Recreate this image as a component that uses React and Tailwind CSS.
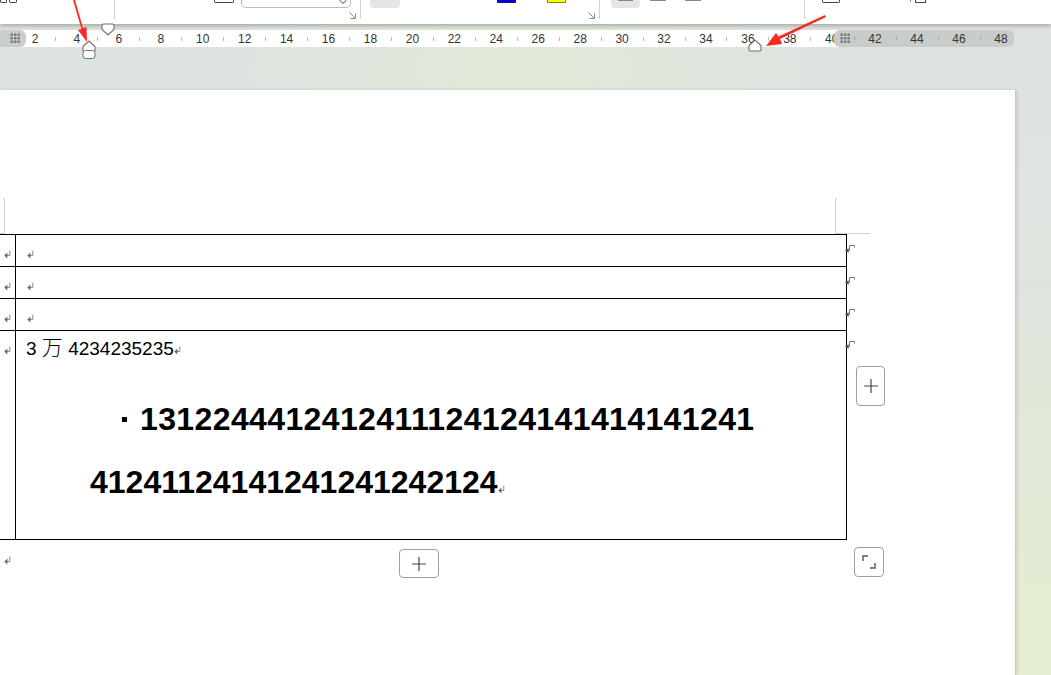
import React from "react";

const SANS = "font-['Liberation_Sans',Arial,'Noto_Sans_CJK_SC',sans-serif]";

// paragraph mark, Word style
const ReturnMark = ({ className = "" }) => (
  <svg width="7" height="9" viewBox="0 0 7 9" className={`shrink-0 ${className}`}>
    <path d="M5.8 0.5V5.5H2.5" fill="none" stroke="#8a8a8a" strokeWidth="1" />
    <path d="M3.4 2.6L0.3 5.4L3.4 8.4Z" fill="#666" />
  </svg>
);

// the one that sits outside the right table border
const EndMark = ({ className = "" }) => (
  <svg width="10" height="8" viewBox="0 0 10 8" className={`relative shrink-0 ${className}`}>
    <path d="M9.5 2.5V0.5H4.5V5.5H2.5" fill="none" stroke="#777" strokeWidth="1" />
    <path d="M3.6 3.2L0 5.5L3.6 7.8Z" fill="#555" />
  </svg>
);

const Dots = () => (
  <svg width="11" height="11" viewBox="0 0 11 11">
    {[0.5, 4, 7.5].map((y) => [0.5, 4, 7.5].map((x) => <rect key={`${x}-${y}`} x={x} y={y} width="2.4" height="2.4" fill="#777" />))}
  </svg>
);

const Ruler = () => {
  const marks = [];
  for (let n = 2; n <= 40; n += 2) marks.push(n);
  return (
    <div className="relative mt-[6px] h-[17px] w-full">
      <div className="absolute inset-y-0 left-0 w-[840px] bg-white" />
      <div className={`relative flex h-full pl-[24.5px] text-[12px] text-[#333] ${SANS}`}>
        {marks.map((n) => (
          <React.Fragment key={n}>
            <span className="flex w-[20.97px] shrink-0 items-center justify-center">{n}</span>
            <span className="flex w-[20.97px] shrink-0 items-center justify-center">
              <i className="block h-[4px] w-px bg-[#bbb]" />
            </span>
          </React.Fragment>
        ))}
      </div>
      <div className="absolute inset-y-0 left-0 flex w-[26px] items-center justify-end rounded-r-md bg-[#c9cdcb] pr-[5px]">
        <Dots />
      </div>
      <div className={`absolute inset-y-0 left-[834px] flex w-[180px] items-center rounded-md bg-[#c8cdcb] pl-[6px] text-[12px] text-[#333] ${SANS}`}>
        <Dots />
        {[42, 44, 46, 48].map((n, i) => (
          <span key={n} className={`absolute w-[24px] text-center ${["left-[29px]", "left-[71px]", "left-[113px]", "left-[155px]"][i]}`}>{n}</span>
        ))}
        {["left-[20px]", "left-[62px]", "left-[104px]", "left-[146px]"].map((c) => (
          <i key={c} className={`absolute top-[6px] block h-[4px] w-px bg-[#a5a9a7] ${c}`} />
        ))}
      </div>
    </div>
  );
};

const Marker = ({ className, up = true }) => (
  <svg width="14" height="13" viewBox="0 0 14 13" className={`absolute ${className}`}>
    <path
      d={up ? "M1 10.5V6.5L7 1L13 6.5V10.5Q13 12 11.5 12H2.5Q1 12 1 10.5Z" : "M1 2.5V6.5L7 12L13 6.5V2.5Q13 1 11.5 1H2.5Q1 1 1 2.5Z"}
      fill="white"
      stroke="#6f6f6f"
      strokeWidth="1.1"
    />
  </svg>
);

const Arrow = ({ className, width, height, viewBox, d }) => (
  <svg width={width} height={height} viewBox={viewBox} className={`absolute ${className}`}>
    <path d={d} fill="#f92a22" />
  </svg>
);

const SquareButton = ({ className = "", children }) => (
  <div className={`flex items-center justify-center rounded-[4px] border-[1.5px] border-[#a0a0a0] bg-white ${className}`}>{children}</div>
);

const Plus = () => (
  <svg width="14" height="14" viewBox="0 0 14 14">
    <path d="M7 0V14M0 7H14" stroke="#444" strokeWidth="1.2" />
  </svg>
);

const DialogArrow = ({ className }) => (
  <svg width="7" height="7" viewBox="0 0 7 7" className={`absolute ${className}`}>
    <path d="M6.5 1.5V6.5H1.5M0.5 0.5L6 6" fill="none" stroke="#888" />
  </svg>
);

const Row = ({ children, className = "" }) => (
  <div className={`flex w-[860px] ${className}`}>
    <div className="flex w-[16px] shrink-0 border-t border-r border-black pl-[4px] pt-[15px]">
      <ReturnMark />
    </div>
    <div className="w-[831px] shrink-0 border-t border-r border-black pl-[11px]">{children}</div>
    <EndMark className="-ml-[2px] mt-[11px]" />
  </div>
);

export default function App() {
  return (
    <div className="relative h-[675px] w-[1051px] overflow-hidden bg-[radial-gradient(ellipse_at_50%_15%,#e1e9d9_0%,transparent_40%),linear-gradient(to_bottom,#dde3df,#dee4de_40%,#e4ecd2_90%)]">
      {/* ribbon leftovers */}
      <div className="relative flex h-[24px] items-start bg-white shadow-[0_2px_4px_rgba(0,0,0,0.25)]">
        <div className="flex h-[19px] w-[115px] shrink-0 justify-end gap-[2px] border-r border-[#d5d5d5] pr-[97px]">
          <i className="block h-[3px] w-[7px] rounded-b-[2px] border-x border-b border-[#444]" />
          <i className="block h-[3px] w-[8px] rounded-b-[2px] border-x border-b border-[#444]" />
        </div>
        <div className="relative h-[19px] w-[246px] shrink-0 border-r border-[#d5d5d5]">
          <i className="absolute left-[99px] top-0 block h-[3px] w-[20px] rounded-b-[2px] border-x border-b border-[#444]" />
          <i className="absolute left-[126px] top-0 block h-[8px] w-[110px] rounded-b-[5px] border-x border-b border-[#bbb]" />
          <svg width="8" height="4" viewBox="0 0 8 4" className="absolute left-[224px] top-0">
            <path d="M0.5 0L4 3.5L7.5 0" fill="none" stroke="#999" strokeWidth="1.4" />
          </svg>
          <DialogArrow className="left-[234px] top-[12px]" />
        </div>
        <div className="relative h-[19px] w-[239px] shrink-0 border-r border-[#d5d5d5]">
          <i className="absolute left-[9px] top-0 block h-[8px] w-[30px] rounded-b-[4px] bg-[#e6e6e6]" />
          <i className="absolute left-[136px] top-0 block h-[3px] w-[19px] rounded-b-[1px] border-x border-b border-[#1a1a60] bg-[#0000f0]" />
          <i className="absolute left-[186px] top-0 block h-[3px] w-[19px] rounded-b-[1px] border-x border-b border-[#8a8a10] bg-[#ffff00]" />
          <DialogArrow className="left-[227px] top-[12px]" />
        </div>
        <div className="relative h-[19px] w-[205px] shrink-0 border-r border-[#d5d5d5]">
          <i className="absolute left-[11px] top-0 block h-[8px] w-[29px] rounded-b-[4px] bg-[#e6e6e6]" />
          <i className="absolute left-[18px] top-0 block h-px w-[15px] bg-[#888]" />
          <i className="absolute left-[50px] top-0 block h-px w-[16px] bg-[#888]" />
          <i className="absolute left-[85px] top-0 block h-px w-[16px] bg-[#888]" />
        </div>
        <div className="relative h-[19px] flex-1">
          <i className="absolute left-[17px] top-0 block h-[3px] w-[18px] rounded-b-[2px] border-x border-b border-[#444]" />
          <i className="absolute left-[105px] top-0 block h-[2px] w-px bg-[#888]" />
          <i className="absolute left-[110px] top-0 block h-[3px] w-[11px] border-x border-b border-[#444]" />
        </div>
      </div>

      <Ruler />

      {/* page */}
      <div className="mt-[43px] h-[585px] w-[1016px] border-r border-[#c6cac4] bg-white pt-[108px] shadow-[1px_0_3px_rgba(0,0,0,0.12)]">
        <div className="relative h-[36px]">
          <i className="absolute left-[4px] top-0 block h-[35px] w-px bg-[#d0d0d0]" />
          <i className="absolute left-0 top-[35px] block h-px w-[5px] bg-[#d0d0d0]" />
          <i className="absolute left-[835px] top-0 block h-[35px] w-px bg-[#d0d0d0]" />
          <i className="absolute left-[835px] top-[35px] block h-px w-[35px] bg-[#d0d0d0]" />
        </div>

        <Row className="h-[32px]"><ReturnMark className="mt-[15px]" /></Row>
        <Row className="h-[32px]"><ReturnMark className="mt-[15px]" /></Row>
        <Row className="h-[32px]"><ReturnMark className="mt-[15px]" /></Row>
        <Row className="h-[209px]">
          <div className={`-ml-px flex h-[31px] items-center text-[19px] leading-none text-black ${SANS}`}>
            <span>3 <span className="font-['Noto_Sans_CJK_SC'] text-[21px] font-light">万</span> 4234235235</span>
            <ReturnMark className="mt-[7px]" />
          </div>
          <div className={`pl-[95px] pt-[26px] text-[32px] font-bold leading-[63px] tracking-[0.38px] text-black ${SANS}`}>
            <div className="flex items-center whitespace-nowrap">
              <i className="mr-[13px] block size-[5px] bg-black" />
              <span>1312244412412411124124141414141241</span>
            </div>
            <div className="-ml-[32px] flex items-center whitespace-nowrap tracking-normal">
              <span>41241124141241241242124</span>
              <ReturnMark className="mt-[14px]" />
            </div>
          </div>
        </Row>
        {/* closing rule of the table */}
        <div className="h-px w-[847px] bg-black" />

        <div className="flex">
          <ReturnMark className="ml-[4px] mt-[16px]" />
          <div className="ml-[388px] mt-[9px]">
            <SquareButton className="h-[29px] w-[40px]"><Plus /></SquareButton>
          </div>
          <div className="ml-[415px] mt-[7px]">
            <SquareButton className="size-[30px]">
              <svg width="14" height="14" viewBox="0 0 14 14">
                <path d="M1 6V1H6M13 8V13H8" fill="none" stroke="#555" strokeWidth="1.4" />
              </svg>
            </SquareButton>
          </div>
        </div>
      </div>

      {/* overlays */}
      <SquareButton className="absolute left-[856px] top-[366px] h-[40px] w-[29px]"><Plus /></SquareButton>
      <Marker up={false} className="left-[101px] top-[23px]" />
      <Marker className="left-[82px] top-[40px]" />
      <svg width="14" height="9" viewBox="0 0 14 9" className="absolute left-[82px] top-[50px]">
        <rect x="1" y="0.5" width="12" height="8" rx="2.5" fill="white" stroke="#6f6f6f" />
      </svg>
      <Marker className="left-[748px] top-[39px]" />
      <Arrow className="left-[70px] top-0" width="22" height="44" viewBox="0 0 22 44" d="M3 0H5L13 28L16.5 27L17 42L8 30L11.5 29Z" />
      <Arrow className="left-[762px] top-[14px]" width="66" height="34" viewBox="0 0 66 34" d="M63 1L64 3L18 25L20 30L4 32L14 19L16.5 22.5Z" />
    </div>
  );
}
